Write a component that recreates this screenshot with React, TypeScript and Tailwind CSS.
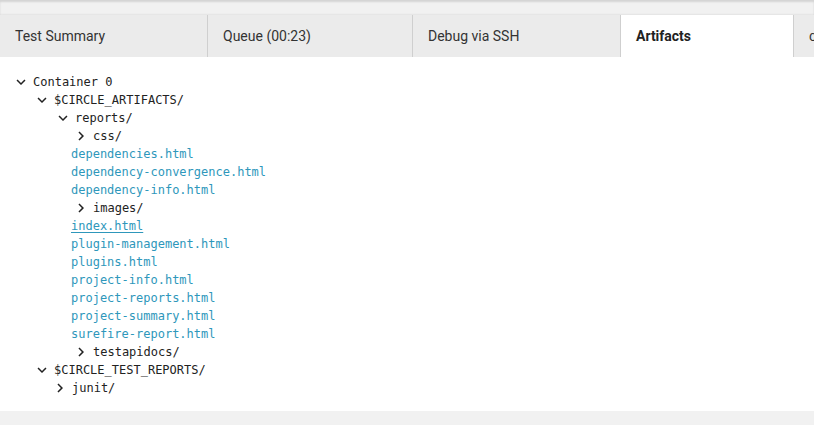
import React from 'react'

type Row = {
  label: string
  indent: number
  kind: 'open' | 'closed' | 'file'
  hover?: boolean
}

const tabs = [
  { label: 'Test Summary', width: 'w-[208px]' },
  { label: 'Queue (00:23)', width: 'w-[205px]' },
  { label: 'Debug via SSH', width: 'w-[208px]' },
  { label: 'Artifacts', width: 'w-[173px]', active: true },
  { label: 'config', width: 'w-[120px]' },
]

// indent = left edge of the 18px icon box (files: left edge of text)
const rows: Row[] = [
  { label: 'Container 0', indent: 12, kind: 'open' },
  { label: '$CIRCLE_ARTIFACTS/', indent: 33, kind: 'open' },
  { label: 'reports/', indent: 54, kind: 'open' },
  { label: 'css/', indent: 72, kind: 'closed' },
  { label: 'dependencies.html', indent: 71, kind: 'file' },
  { label: 'dependency-convergence.html', indent: 71, kind: 'file' },
  { label: 'dependency-info.html', indent: 71, kind: 'file' },
  { label: 'images/', indent: 72, kind: 'closed' },
  { label: 'index.html', indent: 71, kind: 'file', hover: true },
  { label: 'plugin-management.html', indent: 71, kind: 'file' },
  { label: 'plugins.html', indent: 71, kind: 'file' },
  { label: 'project-info.html', indent: 71, kind: 'file' },
  { label: 'project-reports.html', indent: 71, kind: 'file' },
  { label: 'project-summary.html', indent: 71, kind: 'file' },
  { label: 'surefire-report.html', indent: 71, kind: 'file' },
  { label: 'testapidocs/', indent: 72, kind: 'closed' },
  { label: '$CIRCLE_TEST_REPORTS/', indent: 33, kind: 'open' },
  { label: 'junit/', indent: 51, kind: 'closed' },
]

function ExpandMore() {
  return (
    <svg width="18" height="18" viewBox="0 0 24 24" className="shrink-0" fill="#222">
      <path d="M16.59 8.59L12 13.17 7.41 8.59 6 10l6 6 6-6z" />
    </svg>
  )
}

function ChevronRight() {
  return (
    <svg width="18" height="18" viewBox="0 0 24 24" className="shrink-0" fill="#222">
      <path d="M10 6L8.59 7.41 13.17 12l-4.58 4.59L10 18l6-6z" />
    </svg>
  )
}

export default function App() {
  return (
    <div className="w-[814px] h-[430px] overflow-hidden bg-white">
      <div className="h-[15px] bg-[#f1f1f1] shadow-[inset_0_2px_2px_rgba(0,0,0,0.12)]" />
      <div className="bg-white shadow-[0_1px_3px_rgba(0,0,0,0.25)]">
        <div className="flex h-[42px] bg-[#ebebeb] font-['Roboto',sans-serif] text-[14px] text-[#333] whitespace-nowrap">
          {tabs.map((t) => (
            <div
              key={t.label}
              className={
                'shrink-0 flex items-center pl-[15px] border-r border-[#cfcfcf] ' +
                t.width +
                (t.active ? ' bg-white font-bold text-[#222]' : '')
              }
            >
              {t.label}
            </div>
          ))}
        </div>
        <div className="pt-[16px] pb-[14px] font-['DejaVu_Sans_Mono',monospace] text-[12px]">
          {rows.map((r, i) => (
            <div key={i} className="flex items-center h-[18px]" style={{ paddingLeft: r.indent }}>
              {r.kind === 'open' && <ExpandMore />}
              {r.kind === 'closed' && <ChevronRight />}
              {r.kind === 'file' ? (
                <a
                  href="#"
                  className={
                    'text-[#2e97bb] ' + (r.hover ? 'underline underline-offset-2 text-[#2b88a8]' : 'no-underline')
                  }
                >
                  {r.label}
                </a>
              ) : (
                <span className="ml-[3px] text-[#222]">{r.label}</span>
              )}
            </div>
          ))}
        </div>
      </div>
      <div className="h-[14px] bg-[#f1f1f1]" />
    </div>
  )
}
